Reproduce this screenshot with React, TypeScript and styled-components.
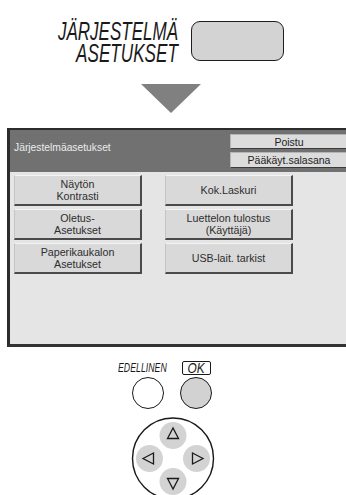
import styled, { createGlobalStyle } from 'styled-components'

const GlobalStyle = createGlobalStyle`
    html, body {
        margin: 0;
        padding: 0;
        background: #ffffff;
        overflow: hidden;
    }
    body {
        font-family: 'Liberation Sans', Arial, sans-serif;
        color: #1a1a1a;
    }
`

const Page = styled.div`
    width: 346px;
    height: 495px;
    display: flex;
    flex-direction: column;
    overflow: hidden;
`

const TopRow = styled.div`
    display: flex;
    justify-content: center;
    align-items: flex-start;
    gap: 13px;
    padding: 20px 4px 0 0;
`

const TitleBlock = styled.div`
    width: 120px;
    display: flex;
    flex-direction: column;
    align-items: flex-end;
    font-size: 25px;
    font-style: italic;
    line-height: 22px;
    color: #1a1a1a;
`

// layout box keeps the visual (condensed) width, inner text is squeezed
const Squeeze = styled.span<{ $w: number }>`
    display: block;
    width: ${(p) => p.$w}px;
    white-space: nowrap;
`

const SqueezeText = styled.span<{ $scale: number }>`
    display: inline-block;
    transform: scaleX(${(p) => p.$scale});
    transform-origin: left center;
`

const KeyButton = styled.div`
    width: 91px;
    height: 38px;
    margin-top: 1px;
    border: 1.5px solid #1e1e1e;
    border-radius: 9px;
    background: #d3d3d3;
`

const ArrowWrap = styled.div`
    display: flex;
    justify-content: center;
    padding: 20px 4px 0 0;
    height: 29px;
`

const Panel = styled.div`
    margin: 15px 0 0 7px;
    width: 345px;
    border-top: 2px solid #2c2c2c;
    border-left: 3px solid #2c2c2c;
    border-bottom: 3px solid #333333;
    background: #e5e5e5;
    display: flex;
    flex-direction: column;
`

const PanelHeader = styled.div`
    height: 42px;
    box-sizing: border-box;
    background: #717171;
    display: flex;
    justify-content: space-between;
    align-items: flex-start;
    padding: 4px 6px 4px 4px;
`

const PanelTitle = styled.div`
    margin-top: 8px;
    font-size: 10.3px;
    line-height: 12px;
    color: #ececec;
`

const HeaderButtons = styled.div`
    display: flex;
    flex-direction: column;
    gap: 3px;
`

const HeaderButton = styled.div<{ $h: number }>`
    width: 119px;
    height: ${(p) => p.$h}px;
    box-sizing: border-box;
    background: #dcdcdc;
    border-top: 1px solid #b5b5b5;
    border-left: 1px solid #b5b5b5;
    border-right: 2px solid #3a3a3a;
    border-bottom: 1px solid #3a3a3a;
    font-size: 10.5px;
    line-height: 12px;
    color: #222;
    display: flex;
    align-items: center;
    justify-content: center;
`

const PanelBody = styled.div`
    height: 172px;
    box-sizing: border-box;
    padding: 3px 0 0 4px;
    display: grid;
    grid-template-columns: 128px 128px;
    grid-auto-rows: 31px;
    align-content: start;
    column-gap: 23px;
    row-gap: 3px;
`

const MenuButton = styled.div`
    box-sizing: border-box;
    background: #d9d9d9;
    border-top: 1px solid #f4f4f4;
    border-left: 1px solid #c4c4c4;
    border-right: 2px solid #4a4a4a;
    border-bottom: 2px solid #4a4a4a;
    font-size: 10.7px;
    line-height: 12.5px;
    color: #2e2e2e;
    text-align: center;
    display: flex;
    align-items: center;
    justify-content: center;
`

const Controls = styled.div`
    margin-top: 14px;
    display: flex;
    justify-content: center;
    gap: 16px;
    padding-right: 2px;
`

const ControlColumn = styled.div`
    width: 32px;
    display: flex;
    flex-direction: column;
    align-items: center;
`

const Label = styled.div<{ $shift: number }>`
    height: 14px;
    display: flex;
    align-items: center;
    margin-right: ${(p) => p.$shift}px;
    font-size: 13.5px;
    font-style: italic;
    line-height: 14px;
    color: #1a1a1a;
`

const OkBox = styled.div`
    width: 27px;
    height: 12px;
    border: 1.5px solid #1a1a1a;
    border-radius: 2px;
    font-size: 14px;
    font-style: italic;
    line-height: 12px;
    text-align: center;
    color: #1a1a1a;

    span {
        display: inline-block;
        transform: scaleX(0.85);
    }
`

const Knob = styled.div<{ $filled?: boolean }>`
    margin-top: 2px;
    width: 32px;
    height: 32px;
    box-sizing: border-box;
    border-radius: 50%;
    border: 1.5px solid #1a1a1a;
    background: ${(p) => (p.$filled ? '#d2d2d2' : '#ffffff')};
`

const DpadWrap = styled.div`
    display: flex;
    justify-content: center;
    margin-top: 8px;
    padding-right: 1px;
`

function Dpad() {
    const pad = '#d3d3d3'
    const ink = '#1a1a1a'
    return (
        <svg width='86' height='86' viewBox='0 0 86 86'>
            <circle cx='43' cy='41.5' r='40.5' fill='#fff' stroke={ink} strokeWidth='1.4' />
            <circle cx='43' cy='18.5' r='13.5' fill={pad} />
            <circle cx='19.5' cy='41.5' r='13.5' fill={pad} />
            <circle cx='66.5' cy='41.5' r='13.5' fill={pad} />
            <circle cx='43' cy='64.5' r='13.5' fill={pad} />
            <g fill='none' stroke={ink} strokeWidth='1.3' strokeLinejoin='miter'>
                <polygon points='43,11 37.5,21.5 48.5,21.5' />
                <polygon points='13,41.5 23.5,36 23.5,47' />
                <polygon points='73,41.5 62.5,36 62.5,47' />
                <polygon points='43,72 37.5,61.5 48.5,61.5' />
            </g>
        </svg>
    )
}

const menu = [
    ['Näytön', 'Kontrasti'],
    ['Kok.Laskuri'],
    ['Oletus-', 'Asetukset'],
    ['Luettelon tulostus', '(Käyttäjä)'],
    ['Paperikaukalon', 'Asetukset'],
    ['USB-lait. tarkist'],
]

export default function App() {
    return (
        <Page>
            <GlobalStyle />
            <TopRow>
                <TitleBlock>
                    <Squeeze $w={120}>
                        <SqueezeText $scale={0.68}>JÄRJESTELMÄ</SqueezeText>
                    </Squeeze>
                    <Squeeze $w={102}>
                        <SqueezeText $scale={0.686}>ASETUKSET</SqueezeText>
                    </Squeeze>
                </TitleBlock>
                <KeyButton />
            </TopRow>

            <ArrowWrap>
                <svg width='60' height='29' viewBox='0 0 60 29'>
                    <polygon points='0,0 60,0 30,29' fill='#808080' />
                </svg>
            </ArrowWrap>

            <Panel>
                <PanelHeader>
                    <PanelTitle>Järjestelmäasetukset</PanelTitle>
                    <HeaderButtons>
                        <HeaderButton $h={15}>Poistu</HeaderButton>
                        <HeaderButton $h={16}>Pääkäyt.salasana</HeaderButton>
                    </HeaderButtons>
                </PanelHeader>
                <PanelBody>
                    {menu.map((lines) => (
                        <MenuButton key={lines.join('-')}>
                            <div>
                                {lines.map((l) => (
                                    <div key={l}>{l}</div>
                                ))}
                            </div>
                        </MenuButton>
                    ))}
                </PanelBody>
            </Panel>

            <Controls>
                <ControlColumn>
                    <Label $shift={11}>
                        <Squeeze $w={49}>
                            <SqueezeText $scale={0.65}>EDELLINEN</SqueezeText>
                        </Squeeze>
                    </Label>
                    <Knob />
                </ControlColumn>
                <ControlColumn>
                    <Label $shift={0}>
                        <OkBox>
                            <span>OK</span>
                        </OkBox>
                    </Label>
                    <Knob $filled />
                </ControlColumn>
            </Controls>

            <DpadWrap>
                <Dpad />
            </DpadWrap>
        </Page>
    )
}
